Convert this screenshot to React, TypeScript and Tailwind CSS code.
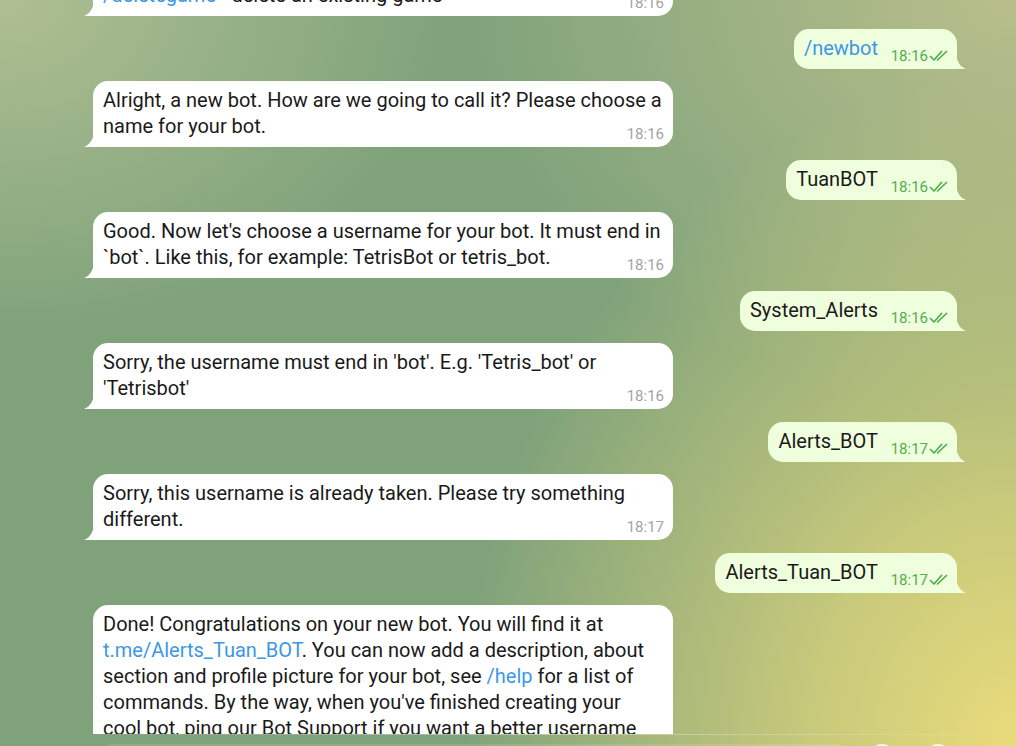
import React from "react";

const Checks = () => (
  <svg width="21" height="12" viewBox="0 0 21 12" fill="none" className="inline-block">
    <path d="M1.5 6.5 L5 10 L12.5 1.5" stroke="#4fae4e" strokeWidth="1.7" strokeLinecap="round" strokeLinejoin="round" />
    <path d="M8.5 10 L17.5 1.5" stroke="#4fae4e" strokeWidth="1.7" strokeLinecap="round" strokeLinejoin="round" />
  </svg>
);

const TailLeft = () => (
  <svg width="10" height="18" viewBox="0 0 10 18" className="absolute left-[-9px] bottom-0">
    <path d="M10 0 V18 H0 C4.5 16.5 9 12 10 3 Z" fill="#ffffff" />
  </svg>
);

const TailRight = () => (
  <svg width="10" height="18" viewBox="0 0 10 18" className="absolute right-[-9px] bottom-0">
    <path d="M0 0 V18 H10 C5.5 16.5 1 12 0 3 Z" fill="#effedd" />
  </svg>
);

const Link = ({ children }: { children: React.ReactNode }) => (
  <span className="text-[#3d97e6]">{children}</span>
);

const Incoming = ({ children, time }: { children: React.ReactNode; time: string }) => (
  <div className="flex">
    <div className="relative w-[580px] bg-white rounded-[15px] rounded-bl-none pl-[10px] pr-[10px] pt-[6px] pb-[8px] text-[20px] leading-[26px] text-[#1a1a1a]">
      {children}
      <span className="inline-block w-[46px]" />
      <span className="absolute right-[9px] bottom-[5px] text-[15px] leading-[16px] text-[#a3a3a3]">{time}</span>
      <TailLeft />
    </div>
  </div>
);

const Outgoing = ({ children, time }: { children: React.ReactNode; time: string }) => (
  <div className="flex justify-end">
    <div className="relative bg-[#effedd] rounded-[15px] rounded-br-none pl-[10px] pr-[10px] pt-[6px] pb-[8px] text-[20px] leading-[26px] text-[#1a1a1a]">
      {children}
      <span className="inline-block w-[69px]" />
      <span className="absolute right-[7px] bottom-[5px] flex items-center gap-[1px] text-[15px] leading-[16px] text-[#4fae4e]">
        {time}
        <Checks />
      </span>
      <TailRight />
    </div>
  </div>
);

export default function App() {
  return (
    <div className="relative w-[1016px] h-[746px] overflow-hidden font-['Roboto',sans-serif] bg-[radial-gradient(ellipse_55%_90%_at_100%_100%,#e9db7b_0%,rgba(233,219,123,0.7)_35%,rgba(233,219,123,0)_100%),radial-gradient(ellipse_45%_45%_at_0%_0%,#afbf92_0%,rgba(175,191,146,0)_100%),radial-gradient(ellipse_55%_55%_at_100%_0%,#b9bf8b_0%,rgba(185,191,139,0)_100%),linear-gradient(#7fa27b,#7fa27b)]">
      <div className="h-[734px] overflow-hidden">
        <div className="flex flex-col gap-[12.5px] pl-[93px] pr-[59px] mt-[-24px]">
          <Incoming time="18:16">
            <Link>/deletegame</Link> - delete an existing game
          </Incoming>
          <Outgoing time="18:16">
            <Link>/newbot</Link>
          </Outgoing>
          <Incoming time="18:16">
            Alright, a new bot. How are we going to call it? Please choose a name for your bot.
          </Incoming>
          <Outgoing time="18:16">TuanBOT</Outgoing>
          <Incoming time="18:16">
            Good. Now let's choose a username for your bot. It must end in `bot`. Like this, for example: TetrisBot or tetris_bot.
          </Incoming>
          <Outgoing time="18:16">System_Alerts</Outgoing>
          <Incoming time="18:16">
            Sorry, the username must end in 'bot'. E.g. 'Tetris_bot' or 'Tetrisbot'
          </Incoming>
          <Outgoing time="18:17">Alerts_BOT</Outgoing>
          <Incoming time="18:17">
            Sorry, this username is already taken. Please try something different.
          </Incoming>
          <Outgoing time="18:17">Alerts_Tuan_BOT</Outgoing>
          <Incoming time="18:17">
            Done! Congratulations on your new bot. You will find it at <Link>t.me/Alerts_Tuan_BOT</Link>. You can now add a description, about section and profile picture for your bot, see <Link>/help</Link> for a list of commands. By the way, when you've finished creating your cool bot, ping our Bot Support if you want a better username for it. Just make sure the bot is fully operational before you do this.
          </Incoming>
        </div>
      </div>
      <div className="mx-[70px] w-[900px] h-px bg-gradient-to-r from-transparent via-white/40 to-white/10" />
      <div className="flex items-start gap-[8px] pl-[100px] pt-[9px]">
        <div className="w-[750px] h-[40px] rounded-[12px] bg-white/10" />
        <div className="ml-[10px] w-[28px] h-[28px] rounded-full bg-white/80" />
        <div className="ml-[20px] w-[28px] h-[28px] rounded-full bg-white/80" />
      </div>
    </div>
  );
}
